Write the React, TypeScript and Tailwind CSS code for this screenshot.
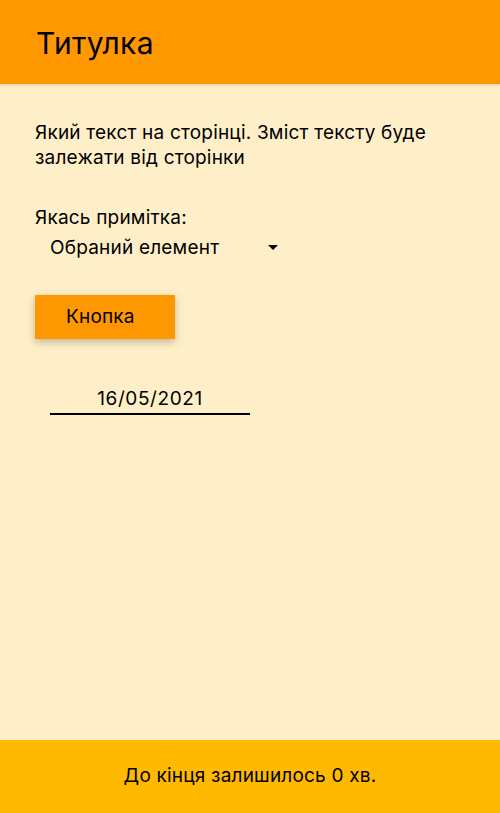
import React from "react";

export default function App() {
  return (
    <div className="flex h-[813px] w-[500px] flex-col bg-[#ffefc9] text-black" style={{ fontFamily: "Inter, 'Noto Sans', sans-serif" }}>
      <header className="flex h-[84px] shrink-0 items-center bg-[#ff9800] px-[36px] pt-[2px] shadow-[0_1px_3px_rgba(0,0,0,0.15)]">
        <h1 className="text-[30px] font-normal tracking-[0.3px]">Титулка</h1>
      </header>
      <main className="flex flex-1 flex-col px-[35px] pt-[36px]">
        <p className="text-[19px] leading-[25px] tracking-[0.2px]">Який текст на сторінці. Зміст тексту буде залежати від сторінки</p>
        <label className="mt-[35px] text-[19px] leading-[25px] tracking-[0.2px]">Якась примітка:</label>
        <div className="ml-[15px] mt-[5px] flex w-[228px] items-center justify-between text-[19px] leading-[25px] tracking-[0.2px]">
          <span>Обраний елемент</span>
          <svg width="10" height="6" viewBox="0 0 10 6"><path d="M0 0h10L5 5z" fill="#000" /></svg>
        </div>
        <button className="mt-[35px] h-[44px] w-[140px] bg-[#ff9800] pl-[31px] text-left text-[19px] tracking-[0.2px] shadow-[0_3px_8px_rgba(0,0,0,0.25)]">Кнопка</button>
        <div className="ml-[15px] mt-[47px] w-[200px] border-b-2 border-black pb-[2px] text-center text-[19px] leading-[25px] tracking-[0.6px]">16/05/2021</div>
      </main>
      <footer className="flex h-[73px] shrink-0 items-center justify-center bg-[#ffb900] text-[19px] tracking-[0.2px]">До кінця залишилось 0 хв.</footer>
    </div>
  );
}
